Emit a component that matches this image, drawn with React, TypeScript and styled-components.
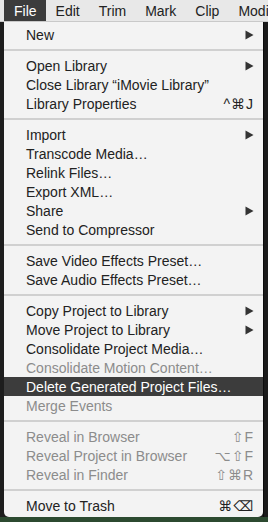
import React from 'react';
import styled, { createGlobalStyle } from 'styled-components';

const GlobalStyle = createGlobalStyle`
	html, body {
		margin: 0;
		padding: 0;
		background: #1d1d1d;
	}
	body {
		font-family: "Liberation Sans", Arial, "DejaVu Sans", sans-serif;
		-webkit-font-smoothing: antialiased;
	}
`;

type Entry =
	| { kind: 'sep' }
	| { kind: 'item'; label: string; shortcut?: string; submenu?: boolean; disabled?: boolean; active?: boolean };

const sep: Entry = { kind: 'sep' };

const entries: Entry[] = [
	{ kind: 'item', label: 'New', submenu: true },
	sep,
	{ kind: 'item', label: 'Open Library', submenu: true },
	{ kind: 'item', label: 'Close Library \u201ciMovie Library\u201d' },
	{ kind: 'item', label: 'Library Properties', shortcut: '^\u2318J' },
	sep,
	{ kind: 'item', label: 'Import', submenu: true },
	{ kind: 'item', label: 'Transcode Media\u2026' },
	{ kind: 'item', label: 'Relink Files\u2026' },
	{ kind: 'item', label: 'Export XML\u2026' },
	{ kind: 'item', label: 'Share', submenu: true },
	{ kind: 'item', label: 'Send to Compressor' },
	sep,
	{ kind: 'item', label: 'Save Video Effects Preset\u2026' },
	{ kind: 'item', label: 'Save Audio Effects Preset\u2026' },
	sep,
	{ kind: 'item', label: 'Copy Project to Library', submenu: true },
	{ kind: 'item', label: 'Move Project to Library', submenu: true },
	{ kind: 'item', label: 'Consolidate Project Media\u2026' },
	{ kind: 'item', label: 'Consolidate Motion Content\u2026', disabled: true },
	{ kind: 'item', label: 'Delete Generated Project Files\u2026', active: true },
	{ kind: 'item', label: 'Merge Events', disabled: true },
	sep,
	{ kind: 'item', label: 'Reveal in Browser', shortcut: '\u21e7F', disabled: true },
	{ kind: 'item', label: 'Reveal Project in Browser', shortcut: '\u2325\u21e7F', disabled: true },
	{ kind: 'item', label: 'Reveal in Finder', shortcut: '\u21e7\u2318R', disabled: true },
	sep,
	{ kind: 'item', label: 'Move to Trash', shortcut: '\u2318\u232b' },
];

const menuTitles = ['File', 'Edit', 'Trim', 'Mark', 'Clip', 'Modify'];

function Arrow({ light }: { light?: boolean }) {
	return (
		<svg width="9" height="10" viewBox="0 0 9 10">
			<path d="M0.5 0.5 L8.5 5 L0.5 9.5 Z" fill={light ? '#ffffff' : '#333333'} />
		</svg>
	);
}

export default function App() {
	return (
		<>
			<GlobalStyle />
			<Screen>
				<MenuBar>
					{menuTitles.map((title, i) => (
						<BarItem key={title} $open={i === 0}>{title}</BarItem>
					))}
				</MenuBar>
				<Body>
					<Menu>
						{entries.map((entry, i) => {
							if (entry.kind === 'sep') {
								return <Separator key={i} />;
							}
							return (
								<Item key={i} $disabled={entry.disabled} $active={entry.active}>
									<Label>{entry.label}</Label>
									{entry.shortcut && <Shortcut>{entry.shortcut}</Shortcut>}
									{entry.submenu && <Arrow light={entry.active} />}
								</Item>
							);
						})}
					</Menu>
					<EdgeStrip />
				</Body>
				<Footer />
			</Screen>
		</>
	);
}

const Screen = styled.div`
	width: 268px;
	height: 522px;
	display: flex;
	flex-direction: column;
	overflow: hidden;
	background: #1d1d1d;
`;

const MenuBar = styled.div`
	display: flex;
	height: 22px;
	padding-left: 4px;
	background: #e8e8e8;
	border-bottom: 1px solid #c9c9c9;
	box-sizing: border-box;
	overflow: hidden;
	white-space: nowrap;
	flex-shrink: 0;
`;

const BarItem = styled.div<{ $open?: boolean }>`
	display: flex;
	align-items: center;
	padding: 0 9px 0 10px;
	font-size: 14px;
	color: ${p => (p.$open ? '#ffffff' : '#222222')};
	background: ${p => (p.$open ? '#3c3c3c' : 'transparent')};
`;

const Body = styled.div`
	display: flex;
	padding-left: 4px;
	flex-shrink: 0;
`;

const Menu = styled.div`
	width: 259px;
	display: flex;
	flex-direction: column;
	padding: 3px 0 2px;
	background: #f3f3f3;
	border-radius: 0 0 5px 5px;
	box-sizing: border-box;
`;

const EdgeStrip = styled.div`
	flex: 1;
	background: #1a1a1a;
	border-left: 1px solid #0c0c0c;
`;

const Footer = styled.div`
	flex: 1;
	background: #2c4a30;
`;

const Item = styled.div<{ $disabled?: boolean; $active?: boolean }>`
	display: flex;
	align-items: center;
	height: 19px;
	padding: 0 9px 0 22px;
	font-size: 14px;
	white-space: nowrap;
	color: ${p => (p.$active ? '#ffffff' : p.$disabled ? '#8c8c8c' : '#222222')};
	background: ${p => (p.$active ? '#3c3c3c' : 'transparent')};
`;

const Label = styled.span`
	flex: 1;
`;

const Shortcut = styled.span`
	font-family: "Liberation Sans", "DejaVu Sans", sans-serif;
	font-size: 14px;
	letter-spacing: 1px;
`;

const Separator = styled.div`
	height: 12px;
	display: flex;
	align-items: center;

	&::before {
		content: '';
		flex: 1;
		height: 2px;
		background: #d0d0d0;
	}
`;
